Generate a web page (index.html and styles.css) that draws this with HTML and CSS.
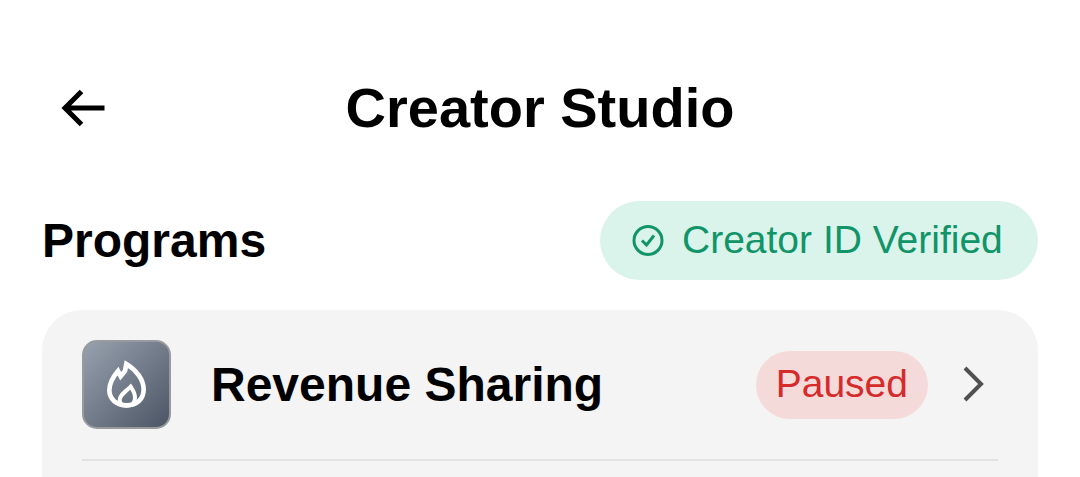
FILE: index.html
```html
<!DOCTYPE html>
<html lang="en">
<head>
<meta charset="utf-8">
<meta name="viewport" content="width=device-width, initial-scale=1">
<title>Creator Studio</title>
<link rel="stylesheet" href="styles.css">
</head>
<body>
<header class="topbar">
  <button class="back" type="button" aria-label="Back">
    <svg class="back-icon" viewBox="0 0 44 38" aria-hidden="true"><path d="M20.500 2.500 4 19l16.500 16.500M4 19H43.500"/></svg>
  </button>
  <h1 class="title">Creator Studio</h1>
</header>
<main class="content">
  <div class="section-head">
    <h2 class="section-title">Programs</h2>
    <span class="verified">
      <svg class="verified-icon" viewBox="0 0 32 32" aria-hidden="true"><circle cx="16" cy="15.500" r="14"/><path d="m10 15.500 4.500 4.500 7.500-9.500"/></svg>
      <span class="verified-label">Creator ID Verified</span>
    </span>
  </div>
  <section class="card">
    <a class="program" href="#revenue">
      <span class="tile">
        <svg class="flame" viewBox="15 10 129 153" aria-hidden="true">
          <path class="flame-outer" d="M79 28 75 49 62 65 54 49C37 69 28 87 28 107C28 134 50 152 80 152C110 152 131 134 131 104C131 75 108 45 79 28Z"/>
          <path class="flame-inner" d="M92 96C78 110 59 120 59 137C59 147 69 153 81 153C96 153 105 144 105 129C105 116 99 106 92 96Z"/>
        </svg>
      </span>
      <span class="program-name">Revenue Sharing</span>
      <span class="status">Paused</span>
      <svg class="chevron" viewBox="0 0 24 38" aria-hidden="true"><path d="m3 2 16 16L3 34"/></svg>
    </a>
  </section>
</main>
</body>
</html>
```
FILE: styles.css
```css
* {
  box-sizing: border-box;
}

body {
  display: flex;
  flex-direction: column;
  min-height: 100vh;
  margin: 0;
  background: #fff;
  color: #000;
  font-family: "Liberation Sans", Arial, sans-serif;
}

.topbar {
  display: grid;
  grid-template-columns: 64px 1fr 64px;
  align-items: center;
  padding: 68px 42px 0;
}

.back {
  display: flex;
  align-items: center;
  justify-content: center;
  height: 64px;
  padding: 0;
  border: 0;
  background: none;
  color: inherit;
}

.back-icon {
  width: 44px;
  height: 38px;
  margin-left: 18px;
  fill: none;
  stroke: currentColor;
  stroke-width: 5;
}

.title,
.section-title {
  margin: 0;
  font-weight: 700;
}

.title {
  font-size: 56px;
  line-height: 80px;
  text-align: center;
}

.content {
  display: flex;
  flex: 1;
  flex-direction: column;
  gap: 30px;
  padding: 53px 42px 0;
}

.section-head {
  display: flex;
  align-items: center;
  justify-content: space-between;
}

.section-title {
  font-size: 48px;
  line-height: 64px;
}

.verified {
  display: flex;
  align-items: center;
  gap: 18px;
  height: 79px;
  padding: 0 30px 0 32px;
  border-radius: 40px;
  background: #dbf4eb;
  color: #109468;
  font-size: 39px;
  white-space: nowrap;
}

.verified-label {
  min-width: 326px;
  padding-bottom: 2px;
}

.verified-icon {
  width: 32px;
  height: 32px;
  fill: none;
  stroke: currentColor;
  stroke-width: 3;
}

.card {
  flex: 1;
  padding: 0 40px;
  border-radius: 40px 40px 0 0;
  background: #f4f4f4;
}

.program {
  display: flex;
  align-items: center;
  padding: 30px 12px 30px 0;
  border-bottom: 2px solid #e2e2e2;
  color: inherit;
  text-decoration: none;
}

.tile {
  display: flex;
  align-items: center;
  justify-content: center;
  width: 89px;
  height: 89px;
  border: 2px solid #999a9e;
  border-radius: 15px;
  background: linear-gradient(135deg, #98a1ae, #4b5565);
}

.flame {
  width: 43px;
  height: 51px;
  margin-bottom: 2px;
  fill: none;
  stroke: #fff;
}

.flame-outer {
  stroke-width: 14;
}

.flame-inner {
  stroke-width: 12;
}

.program-name {
  flex: 1;
  padding-left: 40px;
  font-size: 48px;
  font-weight: 700;
  line-height: 64px;
}

.status {
  padding: 0 20px 2px;
  border-radius: 34px;
  background: #f5dada;
  color: #d52b2b;
  font-size: 39px;
  line-height: 66px;
}

.chevron {
  width: 24px;
  height: 38px;
  margin-left: 34px;
  fill: none;
  stroke: #505050;
  stroke-width: 4;
}
```
